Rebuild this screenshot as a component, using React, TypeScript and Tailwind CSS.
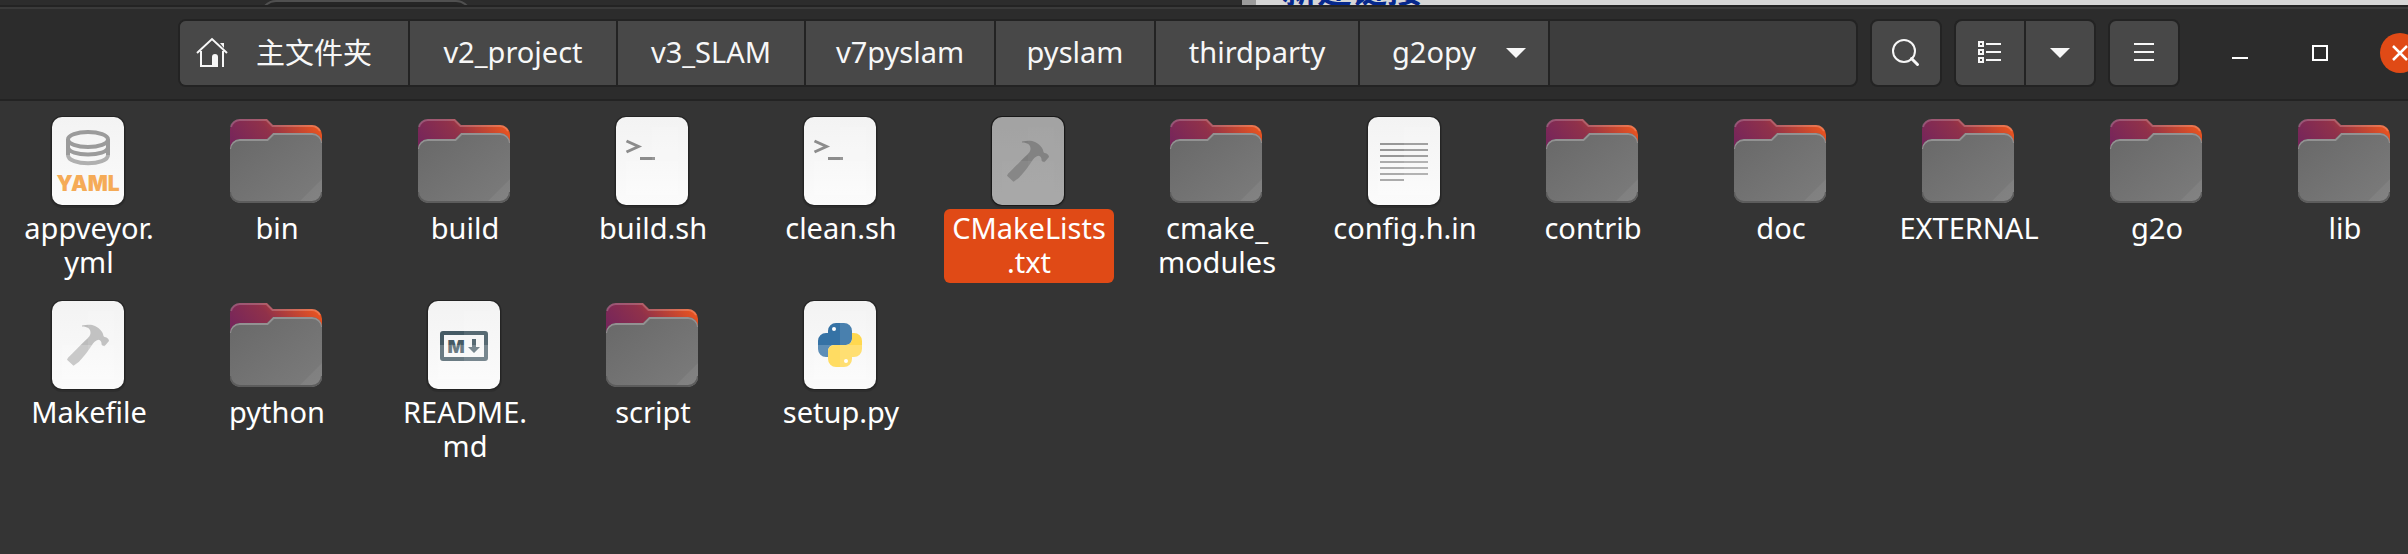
import type { ReactNode } from 'react';

type IconKind = 'folder' | 'yaml' | 'shell' | 'make' | 'text' | 'markdown' | 'python';

type FileEntry = {
  name: string;
  lines: string[];
  icon: IconKind;
  selected?: boolean;
};

const files: FileEntry[] = [
  { name: 'appveyor.yml', lines: ['appveyor.', 'yml'], icon: 'yaml' },
  { name: 'bin', lines: ['bin'], icon: 'folder' },
  { name: 'build', lines: ['build'], icon: 'folder' },
  { name: 'build.sh', lines: ['build.sh'], icon: 'shell' },
  { name: 'clean.sh', lines: ['clean.sh'], icon: 'shell' },
  { name: 'CMakeLists.txt', lines: ['CMakeLists', '.txt'], icon: 'make', selected: true },
  { name: 'cmake_modules', lines: ['cmake_', 'modules'], icon: 'folder' },
  { name: 'config.h.in', lines: ['config.h.in'], icon: 'text' },
  { name: 'contrib', lines: ['contrib'], icon: 'folder' },
  { name: 'doc', lines: ['doc'], icon: 'folder' },
  { name: 'EXTERNAL', lines: ['EXTERNAL'], icon: 'folder' },
  { name: 'g2o', lines: ['g2o'], icon: 'folder' },
  { name: 'lib', lines: ['lib'], icon: 'folder' },
  { name: 'Makefile', lines: ['Makefile'], icon: 'make' },
  { name: 'python', lines: ['python'], icon: 'folder' },
  { name: 'README.md', lines: ['README.', 'md'], icon: 'markdown' },
  { name: 'script', lines: ['script'], icon: 'folder' },
  { name: 'setup.py', lines: ['setup.py'], icon: 'python' },
];

const crumbs = [
  { label: 'v2_project', width: 'w-[208px]' },
  { label: 'v3_SLAM', width: 'w-[188px]' },
  { label: 'v7pyslam', width: 'w-[190px]' },
  { label: 'pyslam', width: 'w-[160px]' },
  { label: 'thirdparty', width: 'w-[204px]' },
];

function FolderIcon() {
  return (
    <svg viewBox="0 0 96 96" className="size-24">
      <defs>
        <linearGradient id="folder-back" x1="0" y1="0.4" x2="1" y2="0">
          <stop offset="0" stopColor="#77265a" />
          <stop offset="0.4" stopColor="#90314a" />
          <stop offset="0.9" stopColor="#e95420" />
        </linearGradient>
        <linearGradient id="folder-front" x1="0" y1="0" x2="1" y2="1">
          <stop offset="0" stopColor="#686868" />
          <stop offset="1" stopColor="#7c7c7c" />
        </linearGradient>
        <clipPath id="folder-clip">
          <path d="M2 36a10 10 0 0 1 10-10h27l6-6h39a10 10 0 0 1 10 10v50a10 10 0 0 1-10 10H12A10 10 0 0 1 2 80z" />
        </clipPath>
      </defs>
      <path d="M2 16A10 10 0 0 1 12 6h27l6 6h39a10 10 0 0 1 10 10v30H2z" fill="url(#folder-back)" />
      <path d="M3 14a9 9 0 0 1 9-7h26.500l6 6H84a9 9 0 0 1 8 5" fill="none" stroke="#ffffff" strokeOpacity="0.2" strokeWidth="2" />
      <g clipPath="url(#folder-clip)">
        <rect x="2" y="20" width="92" height="70" fill="url(#folder-front)" />
        <path d="M70 90l24-24v24z" fill="#fff" fillOpacity="0.06" />
        <path d="M2 36a10 9 0 0 1 10-9h27.500l6-6H84a10 9 0 0 1 10 9" fill="none" stroke="#929292" strokeWidth="2" />
        <path d="M2 79a10 10 0 0 0 10 10h72a10 10 0 0 0 10-10" fill="none" stroke="#5c5c5c" strokeWidth="2" />
      </g>
    </svg>
  );
}

function PageIcon({ children, shade = true }: { children: ReactNode; shade?: boolean }) {
  return (
    <svg viewBox="0 0 96 96" className="size-24">
      <defs>
        <linearGradient id="page-fill" x1="0" y1="0" x2="0" y2="1">
          <stop offset="0" stopColor="#f3f3f3" />
          <stop offset="1" stopColor="#fbfbfb" />
        </linearGradient>
      </defs>
      <rect x="10" y="3" width="76" height="92" rx="12" fill="#000" fillOpacity="0.12" />
      <rect x="11" y="3" width="74" height="90" rx="11" fill="#242424" />
      <rect x="12" y="4" width="72" height="88" rx="10" fill="url(#page-fill)" />
      {children}
      {shade && (
        <>
          <rect x="48" y="14" width="26" height="68" fill="#fff" fillOpacity="0.1" />
          <rect x="22" y="48" width="52" height="34" fill="#fff" fillOpacity="0.2" />
        </>
      )}
    </svg>
  );
}

function YamlIcon() {
  return (
    <PageIcon shade={false}>
      <g fill="none" stroke="#9b9b9b" strokeWidth="4">
        <ellipse cx="48" cy="26.500" rx="20" ry="7.500" />
        <path d="M28 26v16M68 26v16" />
        <path d="M28 34c0 10 40 10 40 0" />
        <path d="M28 42c0 11 40 11 40 0" stroke="#b0b0b0" />
      </g>
      <text x="48" y="78" textAnchor="middle" fontFamily="Inter, sans-serif" fontWeight="900" fontSize="21" fill="#f5ab57">
        YAML
      </text>
    </PageIcon>
  );
}

function ShellIcon() {
  return (
    <PageIcon>
      <path d="M22.500 28l12 5.500-12 5.500" fill="none" stroke="#8c8c8c" strokeWidth="3" />
      <path d="M36 44h15v3H36z" fill="#8c8c8c" />
    </PageIcon>
  );
}

function MakeIcon() {
  return (
    <PageIcon>
      <path
        d="M42 28.500c5-1 10-1 13 .5 5 2.500 8 6 8.500 10 .5 1.200 2 1 3 1.500 1.500.8 2.500 2 2.500 3.500l-4.500 5.200c-2 0-3-1-3-2.500 0-2-.8-3.500-3-4-3 .5-5 3-7 6-5 8-9 12-12.500 16l-5.500 4-6.500-6 1-2c5-5 12-12 17-17 4-3.500 5.500-5.500 5.500-8 0-4-3-6.200-8.500-6.200z"
        fill="#bcbcbc"
      />
    </PageIcon>
  );
}

function TextIcon() {
  return (
    <PageIcon>
      <path d="M24 31h48M24 37h48M24 43h48M24 49h48M24 55h48M24 61h48M24 67h24" stroke="#979797" strokeWidth="2" />
    </PageIcon>
  );
}

function MarkdownIcon() {
  return (
    <PageIcon>
      <rect x="26" y="36" width="44" height="26" rx="1" fill="none" stroke="#455a64" strokeWidth="4" />
      <text x="40" y="56" textAnchor="middle" fontFamily="Inter, sans-serif" fontWeight="900" fontSize="18" fill="#455a64">
        M
      </text>
      <path d="M56 42h4v8h4l-6 6-6-6h4z" fill="#455a64" />
    </PageIcon>
  );
}

function PythonIcon() {
  const snake =
    'M44 26h8a8 8 0 0 1 8 8v8a6 6 0 0 1-6 6H42a6 6 0 0 0-6 6v6h-2a8 8 0 0 1-8-8v-8a8 8 0 0 1 8-8h2v-2a8 8 0 0 1 8-8z';
  return (
    <PageIcon>
      <path d={snake} fill="#3572a5" />
      <path d={snake} fill="#ffd43b" transform="rotate(180 48 48)" />
      <circle cx="42" cy="32" r="2" fill="#fff" />
      <circle cx="54" cy="64" r="2" fill="#fff" />
    </PageIcon>
  );
}

const icons: Record<IconKind, () => ReactNode> = {
  folder: FolderIcon,
  yaml: YamlIcon,
  shell: ShellIcon,
  make: MakeIcon,
  text: TextIcon,
  markdown: MarkdownIcon,
  python: PythonIcon,
};

function FileItem({ file }: { file: FileEntry }) {
  const Icon = icons[file.icon];
  return (
    <button aria-label={file.name} className="flex flex-col items-center justify-start">
      <span className={`mr-0.5 ${file.selected ? 'brightness-[.67]' : ''}`}>
        <Icon />
      </span>
      <span
        className={`w-full rounded-md pt-0.5 pb-1 text-[29px] leading-[34px] text-white ${
          file.selected ? 'bg-[#e04a16]' : ''
        }`}
      >
        {file.lines.map((line) => (
          <span key={line} className="block">
            {line}
          </span>
        ))}
      </span>
    </button>
  );
}

function Triangle() {
  return (
    <svg viewBox="0 0 20 10" className="h-2.5 w-5">
      <path d="M0 0h20L10 10z" fill="#f7f7f7" />
    </svg>
  );
}

function PathBar() {
  return (
    <nav className="flex h-[68px] flex-1 overflow-hidden rounded-lg border-2 border-[#232323] bg-[#3d3d3d]">
      <button className="flex w-[230px] items-center gap-7 border-r-2 border-[#232323] bg-[#484848] pl-4">
        <svg viewBox="0 0 32 32" className="size-8" fill="none" stroke="#f7f7f7" strokeWidth="2">
          <path d="M1 16L16 2l15 14M5 14v15h13M27 14v16" />
          <path d="M24 6h4v5z" fill="#f7f7f7" stroke="none" />
          <path d="M16 30V20q0-3 3-3t3 3v10z" fill="#f7f7f7" stroke="none" />
        </svg>
        <span>主文件夹</span>
      </button>
      {crumbs.map((crumb) => (
        <button key={crumb.label} className={`${crumb.width} border-r-2 border-[#232323] bg-[#484848] pb-[3px]`}>
          {crumb.label}
        </button>
      ))}
      <button className="flex w-[190px] items-center justify-between border-r-2 border-[#232323] bg-[#484848] pr-[22px] pl-8">
        <span className="pb-[3px]">g2opy</span>
        <Triangle />
      </button>
    </nav>
  );
}

const toolButton = 'flex h-[68px] items-center justify-center border-2 border-[#232323] bg-[#484848]';

function HeaderBar() {
  return (
    <header className="flex items-center border-t-2 border-b-2 border-t-[#3a3a3a] border-b-[#232323] bg-[#2c2c2c] pt-2.5 pb-3 pl-[178px] text-[29px] text-[#f7f7f7]">
      <PathBar />
      <div className="-mr-3 ml-3 flex shrink-0 items-center">
        <button aria-label="搜索" className={`${toolButton} mr-3 w-[72px] rounded-lg`}>
          <svg viewBox="0 0 32 32" className="size-8" fill="none" stroke="#f7f7f7">
            <circle cx="14" cy="14" r="11" strokeWidth="2" />
            <path d="M21.500 21.500l6 6" strokeWidth="3" strokeLinecap="round" />
          </svg>
        </button>
        <button aria-label="列表视图" className={`${toolButton} w-[70px] rounded-l-lg border-r-0`}>
          <svg viewBox="0 0 32 32" className="size-8" fill="none" stroke="#f7f7f7" strokeWidth="2">
            <path d="M5 5h4v4H5zM5 13h4v4H5zM5 21h4v4H5z" />
            <path d="M12 7h15M12 15h15M12 23h15" />
          </svg>
        </button>
        <button aria-label="视图选项" className={`${toolButton} mr-3 w-[72px] rounded-r-lg`}>
          <Triangle />
        </button>
        <button aria-label="菜单" className={`${toolButton} mr-10 w-[72px] rounded-lg`}>
          <svg viewBox="0 0 32 32" className="size-8" stroke="#f7f7f7" strokeWidth="2">
            <path d="M6 7h20M6 15h20M6 23h20" />
          </svg>
        </button>
        <div className="flex gap-10">
          <button aria-label="最小化" className="size-10">
            <svg viewBox="0 0 40 40" stroke="#fff" strokeWidth="2">
              <path d="M12 25h16" />
            </svg>
          </button>
          <button aria-label="最大化" className="size-10">
            <svg viewBox="0 0 40 40" fill="none" stroke="#fff" strokeWidth="2">
              <path d="M13 13h14v14H13z" />
            </svg>
          </button>
          <button aria-label="关闭" className="size-10 rounded-full bg-[#e04a16]">
            <svg viewBox="0 0 40 40" stroke="#fff" strokeWidth="2.500">
              <path d="M13 13l14 14M27 13L13 27" />
            </svg>
          </button>
        </div>
      </div>
    </header>
  );
}

// sliver of the windows that lie behind the file manager
function BackgroundWindows() {
  return (
    <div className="flex h-[7px] overflow-hidden border-b-2 border-[#232323] bg-[#2c2c2c]">
      <div className="flex flex-1 pl-[260px]">
        <div className="h-10 w-[212px] rounded-2xl border-2 border-[#505050] bg-[#262626]" />
      </div>
      <div className="w-[1166px] border-l-[14px] border-[#9c9c9c] bg-[#d6d6d6]">
        <p className="-mt-7 pl-[26px] text-[35px] leading-9 font-bold text-[#06288c]">新建链接</p>
      </div>
    </div>
  );
}

export default function App() {
  return (
    <div className="min-h-screen w-full overflow-hidden bg-[#343434] font-['Noto_Sans','Noto_Sans_CJK_SC',sans-serif]">
      <BackgroundWindows />
      <HeaderBar />
      <main className="grid grid-cols-[repeat(13,170px)] gap-x-[18px] gap-y-3.5 pt-3 pl-1">
        {files.map((file) => (
          <FileItem key={file.name} file={file} />
        ))}
      </main>
    </div>
  );
}
